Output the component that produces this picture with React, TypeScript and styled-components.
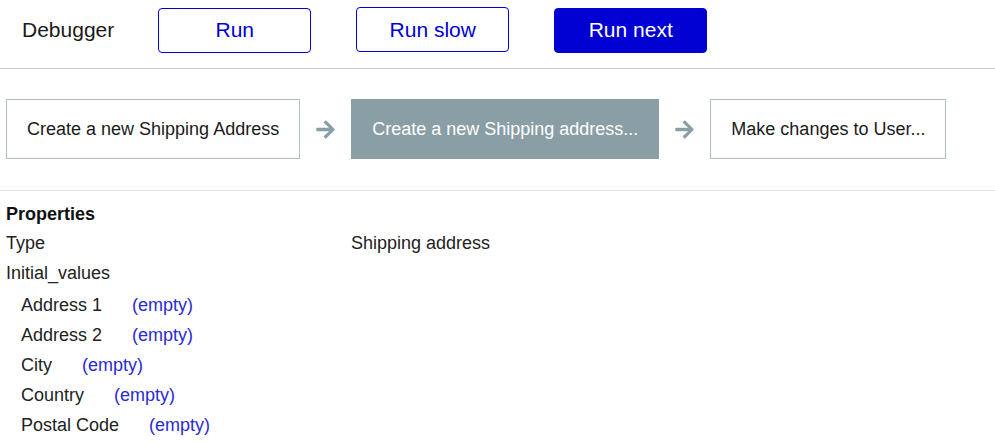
import * as React from 'react';
import styled, { createGlobalStyle } from 'styled-components';

const GlobalStyle = createGlobalStyle`
  html, body {
    margin: 0;
    padding: 0;
    background: #fff;
    font-family: 'Liberation Sans', Arial, sans-serif;
    color: #222;
  }
`;

const Header = styled.div`
  display: flex;
  align-items: center;
  height: 68px;
  padding-left: 22px;
  border-bottom: 1px solid #cccccc;
`;

const Title = styled.div`
  font-size: 21px;
  color: #1a1a1a;
  margin-right: 44px;
  margin-top: -8px;
`;

const Button = styled.button<{ primary?: boolean; nudge?: number }>`
  width: 153px;
  height: 45px;
  margin-right: 45px;
  margin-top: ${(p) => (p.nudge ? p.nudge : 0) - 8}px;
  border: 1px solid #0000d2;
  border-radius: 4px;
  font-family: 'Liberation Sans', Arial, sans-serif;
  font-size: 21px;
  cursor: pointer;
  color: ${(p) => (p.primary ? '#ffffff' : '#0000d2')};
  background: ${(p) => (p.primary ? '#0000d2' : '#ffffff')};
`;

const Steps = styled.div`
  display: flex;
  align-items: center;
  padding: 30px 6px 31px;
  border-bottom: 1px solid #e6e6e6;
`;

const Step = styled.div<{ active?: boolean }>`
  height: 60px;
  box-sizing: border-box;
  display: flex;
  align-items: center;
  padding: 0 20px;
  font-size: 18px;
  white-space: nowrap;
  border: 1px solid ${(p) => (p.active ? '#8a9ea5' : '#b0bec5')};
  background: ${(p) => (p.active ? '#8a9ea5' : '#ffffff')};
  color: ${(p) => (p.active ? '#ffffff' : '#1a1a1a')};
`;

const Arrow = styled.div`
  width: 51px;
  display: flex;
  justify-content: center;
  align-items: center;
`;

const Props = styled.div`
  padding: 9px 6px 0;
  font-size: 18px;
`;

const PropsTitle = styled.div`
  font-weight: bold;
  height: 28px;
  line-height: 28px;
  color: #111;
`;

const Row = styled.div`
  display: grid;
  grid-template-columns: 345px 1fr;
  height: 30px;
  line-height: 30px;
`;

const Fields = styled.div`
  margin-top: 2px;
`;

const SubRow = styled.div`
  display: flex;
  height: 30px;
  line-height: 30px;
  padding-left: 15px;
`;

const Empty = styled.span`
  color: #2a2ad6;
  margin-left: 30px;
`;

const ArrowIcon = () => (
  <svg width="21" height="21" viewBox="0 0 448 512">
    <path
      fill="#8a9ea5"
      d="M190.5 66.9l22.2-22.2c9.4-9.4 24.6-9.4 33.9 0L441 239c9.4 9.4 9.4 24.6 0 33.9L246.6 467.3c-9.4 9.4-24.6 9.4-33.9 0l-22.2-22.2c-9.5-9.5-9.3-25 .4-34.3L311.4 296H24c-13.3 0-24-10.7-24-24v-32c0-13.3 10.7-24 24-24h287.4L190.9 101.2c-9.8-9.3-10-24.8-.4-34.3z"
    />
  </svg>
);

const fields = ['Address 1', 'Address 2', 'City', 'Country', 'Postal Code'];

export default function App() {
  return (
    <>
      <GlobalStyle />
      <Header>
        <Title>Debugger</Title>
        <Button>Run</Button>
        <Button nudge={-1}>Run slow</Button>
        <Button primary>Run next</Button>
      </Header>
      <Steps>
        <Step>Create a new Shipping Address</Step>
        <Arrow>
          <ArrowIcon />
        </Arrow>
        <Step active>Create a new Shipping address...</Step>
        <Arrow>
          <ArrowIcon />
        </Arrow>
        <Step>Make changes to User...</Step>
      </Steps>
      <Props>
        <PropsTitle>Properties</PropsTitle>
        <Row>
          <span>Type</span>
          <span>Shipping address</span>
        </Row>
        <Row>
          <span>Initial_values</span>
        </Row>
        <Fields>
          {fields.map((f) => (
            <SubRow key={f}>
              <span>{f}</span>
              <Empty>(empty)</Empty>
            </SubRow>
          ))}
        </Fields>
      </Props>
    </>
  );
}
